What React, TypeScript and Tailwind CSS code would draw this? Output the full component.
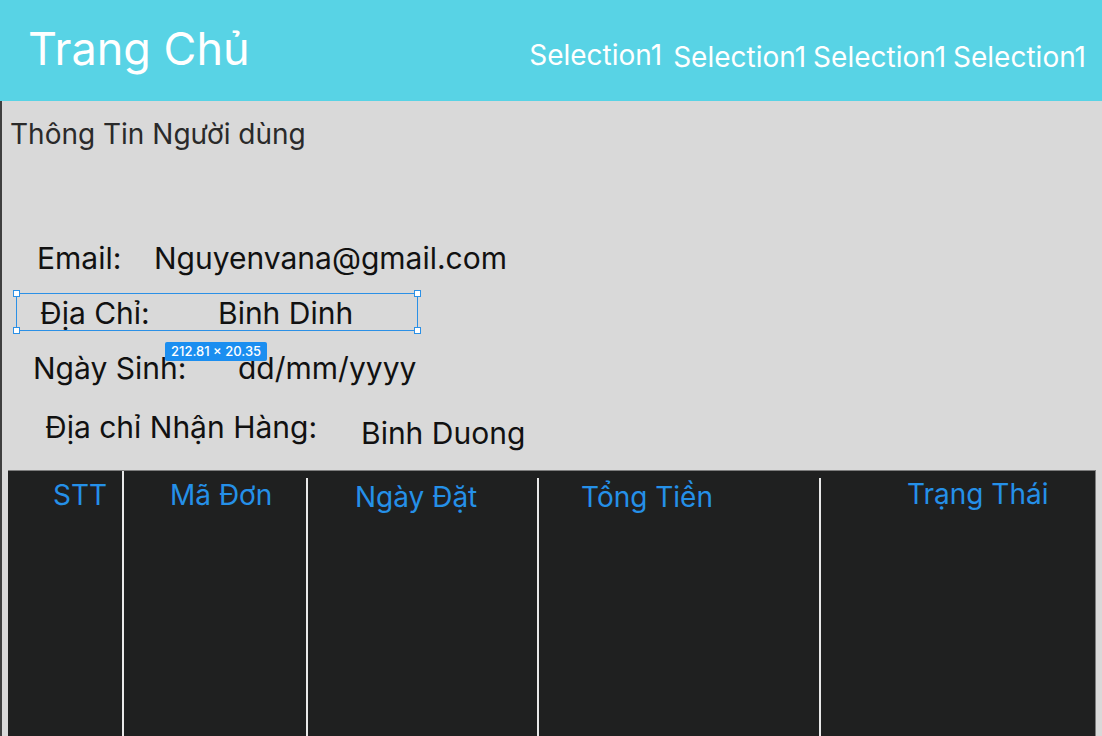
import React from 'react';

const columns = [
  { label: 'STT', width: 'w-[115px]', pad: 'pl-[45px] pt-[8px]', line: false },
  { label: 'Mã Đơn', width: 'w-[184px]', pad: 'pl-[47px] pt-[8px]', line: true },
  { label: 'Ngày Đặt', width: 'w-[231px]', pad: 'pl-[48px] pt-[10px]', line: true },
  { label: 'Tổng Tiền', width: 'w-[282px]', pad: 'pl-[43px] pt-[10px]', line: true },
  { label: 'Trạng Thái', width: 'flex-1', pad: 'pl-[87px] pt-[7px]', line: true },
];

const App: React.FC = () => {
  return (
    <div className="h-[736px] w-[1102px] overflow-hidden flex flex-col font-['Inter','Noto_Sans',sans-serif]">
      {/* Header */}
      <header className="h-[101px] shrink-0 bg-[#58d3e5] flex items-start justify-between pl-[28px] pr-[16px]">
        <h1 className="mt-[22px] text-[45px] leading-[54px] text-white font-normal">Trang Chủ</h1>
        <nav className="flex items-start mt-[38px] text-[28px] leading-[34px] text-white">
          <span className="mr-[11px]">Selection1</span>
          <span className="mt-[2px] mr-[7px]">Selection1</span>
          <span className="mt-[2px] mr-[7px]">Selection1</span>
          <span className="mt-[2px]">Selection1</span>
        </nav>
      </header>

      {/* Body */}
      <main className="flex-1 bg-[#d9d9d9] border-l-2 border-[#3f3f3f] flex flex-col relative">
        <h2 className="mt-[17px] pl-[8px] text-[28px] leading-[32px] text-[#2a2a2a]">Thông Tin Người dùng</h2>

        <div className="mt-[91px] pl-[35px] flex text-[30px] leading-[34px] text-[#111]">
          <span className="w-[117px]">Email:</span>
          <span>Nguyenvana@gmail.com</span>
        </div>

        <div className="mt-[21px] pl-[38px] flex text-[30px] leading-[34px] text-[#111]">
          <span className="w-[178px]">Địa Chỉ:</span>
          <span>Binh Dinh</span>
        </div>

        <div className="mt-[21px] pl-[31px] flex text-[30px] leading-[34px] text-[#111]">
          <span className="w-[205px]">Ngày Sinh:</span>
          <span>dd/mm/yyyy</span>
        </div>

        <div className="mt-[25px] pl-[43px] flex items-start text-[30px] leading-[34px] text-[#111]">
          <span className="w-[316px]">Địa chỉ Nhận Hàng:</span>
          <span className="mt-[6px]">Binh Duong</span>
        </div>

        {/* Orders table */}
        <section className="mt-[20px] ml-[6px] mr-[6px] flex-1 bg-[#1f2020] border-t border-r border-[#7d7d7d] flex">
          {columns.map((c) => (
            <div key={c.label} className={`${c.width} relative h-full`}>
              {c.line && (
                <div className={`absolute -left-[1px] bottom-0 w-[2px] bg-[#e8e8e8] ${c.label === 'Mã Đơn' ? 'top-0' : 'top-[7px]'}`} />
              )}
              <div className={`${c.pad} text-[28px] leading-[32px] text-[#2590e8]`}>{c.label}</div>
            </div>
          ))}
        </section>

        {/* Selection overlay */}
        <div className="absolute left-[14px] top-[192px] w-[402px] h-[38px] border-[1.5px] border-[#2b90e6] pointer-events-none">
          <span className="absolute -left-[4px] -top-[4px] w-[7px] h-[7px] bg-white border border-[#2b90e6]" />
          <span className="absolute -right-[4px] -top-[4px] w-[7px] h-[7px] bg-white border border-[#2b90e6]" />
          <span className="absolute -left-[4px] -bottom-[4px] w-[7px] h-[7px] bg-white border border-[#2b90e6]" />
          <span className="absolute -right-[4px] -bottom-[4px] w-[7px] h-[7px] bg-white border border-[#2b90e6]" />
          <span className="absolute left-[148px] top-[48px] h-[19px] px-[6px] rounded-[2px] bg-[#1b8ef0] text-white text-[13px] leading-[19px] font-medium whitespace-nowrap">
            212.81 × 20.35
          </span>
        </div>
      </main>
    </div>
  );
};

export default App;
